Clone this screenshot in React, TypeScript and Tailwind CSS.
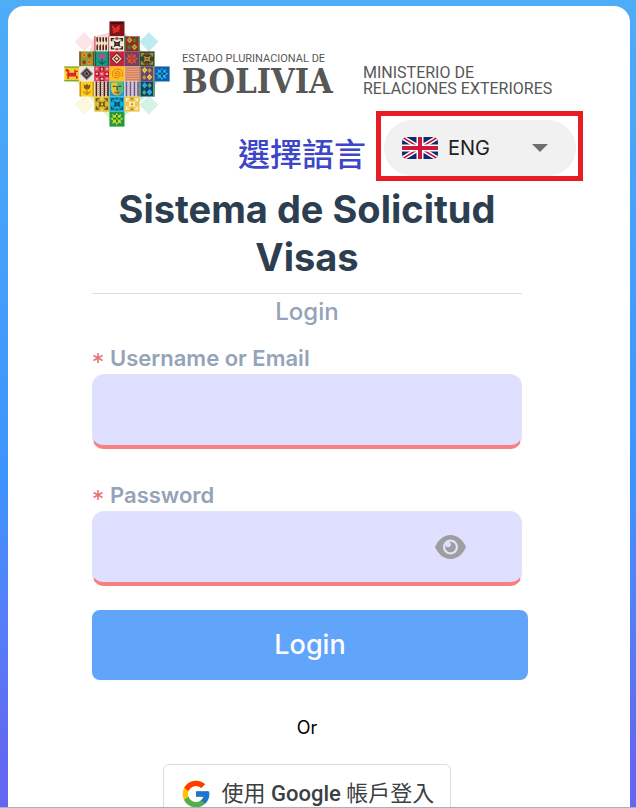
import { useState } from 'react';
import type { FormEvent, ReactNode } from 'react';
import { FcGoogle } from 'react-icons/fc';

type Motif =
  | 'bird'
  | 'teeth'
  | 'weave'
  | 'diamond'
  | 'check'
  | 'spiral'
  | 'bars'
  | 'stripes'
  | 'face'
  | 'star'
  | 'flower'
  | 'beads'
  | 'llama';

type Tile = { col: number; row: number; bg: string; fg: string; alt: string; motif: Motif };

const tiles: Tile[] = [
  { col: 3, row: 0, bg: '#7d1418', fg: '#e02a2c', alt: '#4a0d10', motif: 'bird' },
  { col: 2, row: 1, bg: '#f3e3cf', fg: '#5c2418', alt: '#c8323c', motif: 'teeth' },
  { col: 3, row: 1, bg: '#f1ead9', fg: '#2e2522', alt: '#a33a32', motif: 'weave' },
  { col: 4, row: 1, bg: '#8c2f1e', fg: '#d9a13a', alt: '#3e7d3b', motif: 'beads' },
  { col: 1, row: 2, bg: '#8a9a35', fg: '#f08a24', alt: '#8c3a1c', motif: 'beads' },
  { col: 2, row: 2, bg: '#179b80', fg: '#d63d91', alt: '#0f5f4c', motif: 'flower' },
  { col: 3, row: 2, bg: '#d21f3f', fg: '#f3dfc4', alt: '#7c2c22', motif: 'diamond' },
  { col: 4, row: 2, bg: '#6d4068', fg: '#d9532f', alt: '#a03a48', motif: 'star' },
  { col: 5, row: 2, bg: '#274c2b', fg: '#c98a3a', alt: '#b53a2a', motif: 'weave' },
  { col: 0, row: 3, bg: '#f6cf2f', fg: '#dd2433', alt: '#6fae3a', motif: 'llama' },
  { col: 1, row: 3, bg: '#ece6e0', fg: '#30282a', alt: '#8b7d78', motif: 'diamond' },
  { col: 2, row: 3, bg: '#b7122f', fg: '#f1b9b2', alt: '#e34a5c', motif: 'check' },
  { col: 3, row: 3, bg: '#fbc21a', fg: '#ee6a1d', alt: '#ee6a1d', motif: 'spiral' },
  { col: 4, row: 3, bg: '#e9a07a', fg: '#c66a50', alt: '#c66a50', motif: 'bars' },
  { col: 5, row: 3, bg: '#6a3f7c', fg: '#e7cf3c', alt: '#b0a03c', motif: 'beads' },
  { col: 6, row: 3, bg: '#0d5fa8', fg: '#25b4e8', alt: '#0b3f7c', motif: 'star' },
  { col: 1, row: 4, bg: '#fbd01e', fg: '#8a5a14', alt: '#c98a1c', motif: 'flower' },
  { col: 2, row: 4, bg: '#f4ead9', fg: '#4b1f1c', alt: '#8f4a3a', motif: 'stripes' },
  { col: 3, row: 4, bg: '#1d9fc4', fg: '#f3c52e', alt: '#1a5f4a', motif: 'face' },
  { col: 4, row: 4, bg: '#e6dbe6', fg: '#6f5a86', alt: '#a995b8', motif: 'stripes' },
  { col: 5, row: 4, bg: '#0c3f78', fg: '#2ea8dc', alt: '#5ab24a', motif: 'beads' },
  { col: 2, row: 5, bg: '#dcb92e', fg: '#6a5218', alt: '#f0d35a', motif: 'weave' },
  { col: 3, row: 5, bg: '#14b0dc', fg: '#0d4c64', alt: '#0d6a94', motif: 'weave' },
  { col: 4, row: 5, bg: '#efc64a', fg: '#fbf0c4', alt: '#b98a20', motif: 'weave' },
  { col: 3, row: 6, bg: '#1f9a3c', fg: '#c9dc2c', alt: '#0f7c2c', motif: 'star' },
];

const motifs: Record<Motif, (fg: string, alt: string) => ReactNode> = {
  bird: (fg, alt) => (
    <>
      <path d="M3 3h38v5H3z" fill={alt} />
      <path d="M9 12l6 4 3 6 5-7 7-3 5 4-6 3 4 4-5 5 4 5-9-2-6 5-9-2 4-4-5-3 5-3-5-5z" fill={fg} />
    </>
  ),
  teeth: (fg, alt) => (
    <>
      <path d="M0 0h3v45H0zM42 0h3v45h-3z" fill={alt} />
      <path d="M6 3h5v10l-2 6-3-6zM15 3h5v10l-2 6-3-6zM24 3h5v10l-2 6-3-6zM33 3h5v10l-2 6-3-6z" fill={fg} />
      <path d="M6 42h5V28l-2-6-3 6zM15 42h5V28l-2-6-3 6zM24 42h5V28l-2-6-3 6zM33 42h5V28l-2-6-3 6z" fill={fg} />
    </>
  ),
  weave: (fg, alt) => (
    <>
      <path d="M4 5h11v4h-6v6H4zM41 5H30v4h6v6h5zM4 40h11v-4h-6v-6H4zM41 40H30v-4h6v-6h5z" fill={fg} />
      <path d="M12 12l7 5h8l7-5-3 9v4l3 8-7-4h-8l-7 4 3-8v-4z" fill={fg} />
      <path d="M18 3h9v7h-9zM18 36h9v6h-9zM20 20h6v6h-6z" fill={alt} />
    </>
  ),
  diamond: (fg, alt) => (
    <>
      <path d="M22 2l20 20-20 20L2 22z" fill={alt} />
      <path d="M22 7l15 15-15 15L7 22z" fill={fg} />
      <path d="M22 12l10 10-10 10-10-10z" fill={alt} />
      <path d="M22 17l5 5-5 5-5-5z" fill={fg} />
    </>
  ),
  check: (fg, alt) => (
    <>
      <path d="M0 0h15v15H0zM30 0h15v15H30zM15 15h15v15H15zM0 30h15v15H0zM30 30h15v15H30z" fill={alt} />
      <path
        d="M4 4h5v5H4zM20 4h5v8h-5zM35 5h6v5h-6zM4 19h7v6H4zM19 20h6v5h-6zM34 19h7v7h-7zM5 35h5v5H5zM19 34h8v6h-8zM35 35h6v4h-6z"
        fill={fg}
      />
    </>
  ),
  spiral: (fg) => (
    <path
      d="M22 23c0-3 5-3 5 1s-9 6-10 0 5-11 11-8 6 16-3 18S8 31 9 21 23 6 31 9s11 14 7 22"
      fill="none"
      stroke={fg}
      strokeWidth="3"
    />
  ),
  bars: (fg) => <path d="M3 5h41M3 12h41M3 19h41M3 26h41M3 33h41M3 40h41" stroke={fg} strokeWidth="2" />,
  stripes: (fg, alt) => (
    <>
      <path d="M6 0v45M18 0v45M30 0v45M41 0v45" stroke={fg} strokeWidth="5" />
      <path d="M12 2v41M24 2v41M36 2v41" stroke={alt} strokeWidth="2" strokeDasharray="3 3" />
    </>
  ),
  face: (fg, alt) => (
    <>
      <path d="M5 3h36v22q-3 15-18 17Q8 40 5 25z" fill={fg} />
      <path d="M23 3h18v22q-3 15-18 17z" fill="#6db768" />
      <path d="M10 13h9v4h-9zM27 13h9v4h-9zM21 14h4v13h-4z" fill={alt} />
      <path d="M14 31h18l-4 5H18z" fill="#d4362c" />
    </>
  ),
  star: (fg, alt) => (
    <>
      <path d="M22 4l5 8 9-5-3 10 9 5-9 5 3 10-9-4-5 8-5-8-9 4 3-10-8-5 8-5-3-10 9 5z" fill={fg} />
      <path d="M20 10h5v9h9v5h-9v9h-5v-9h-9v-5h9z" fill={alt} />
      <path d="M20 19h5v5h-5z" fill={fg} />
    </>
  ),
  flower: (fg, alt) => (
    <>
      <path d="M3 0v45M42 0v45" stroke={alt} strokeWidth="4" />
      <path d="M13 8l6 4 4-6 4 6 6-4-1 11-5 5h-8l-5-5z" fill={fg} />
      <path d="M21 22h4v19h-4zM12 28l9 6v5l-9-6zM34 28l-9 6v5l9-6z" fill={alt} />
    </>
  ),
  beads: (fg, alt) => (
    <>
      <path d="M2 0v45M43 0v45" stroke={alt} strokeWidth="4" />
      <path d="M15 2l9 9-9 10-8-10zM30 23l9 9-9 10-8-10z" fill={fg} />
      <path d="M30 4l7 8-7 8-6-8zM14 25l7 8-7 8-6-8z" fill={alt} />
      <path d="M13 9h4v4h-4zM28 30h4v4h-4z" fill={alt} />
    </>
  ),
  llama: (fg, alt) => (
    <>
      <path d="M0 0h45v4H0zM0 41h45v4H0z" fill={alt} />
      <path d="M4 8h7v3h4v8h15V9h4v4h7v4h-5v12h4v8h-5v-7H14v7H9v-9L5 24h4v-9H4z" fill={fg} />
    </>
  ),
};

const ChakanaLogo = () => (
  <svg viewBox="24 26 320 320" className="size-[106px] shrink-0" aria-label="Bolivia">
    <g opacity="0.75">
      <path d="M85 60l29 29-29 29-29-29z" fill="#fbdde0" />
      <path d="M280 60l29 29-29 29-29-29z" fill="#a9e3ec" />
      <path d="M85 250l29 29-29 29-29-29z" fill="#fbf6d2" />
      <path d="M280 250l29 29-29 29-29-29z" fill="#c8efdd" />
      <path d="M115 73l45-12v60h-60z" fill="#f8c6d6" />
      <path d="M206 60l58 62h-58z" fill="#dcc0e2" />
      <path d="M58 210h60v60z" fill="#fdeab8" />
      <path d="M252 210h58l-58 50z" fill="#bfe3f0" />
      <path d="M96 255h66v66z" fill="#e5f0a8" />
      <path d="M206 255h64l-64 60z" fill="#bde8c8" />
    </g>
    {tiles.map((tile) => (
      <g key={`${tile.col}-${tile.row}`} transform={`translate(${25 + tile.col * 45.4} ${27 + tile.row * 45.4})`}>
        <rect width="45.4" height="45.4" fill={tile.bg} />
        {motifs[tile.motif](tile.fg, tile.alt)}
      </g>
    ))}
  </svg>
);

const UkFlag = () => (
  <svg viewBox="0 0 36 22" className="w-9 h-[22px] shrink-0" aria-hidden="true">
    <clipPath id="flag">
      <rect width="36" height="22" rx="5" />
    </clipPath>
    <g clipPath="url(#flag)">
      <rect width="36" height="22" fill="#0a2a72" />
      <path d="M0 0l36 22M36 0L0 22" stroke="#fff" strokeWidth="4.5" />
      <path d="M0 0l18 11M36 22L18 11M36 0L18 11M0 22l18-11" stroke="#d0163a" strokeWidth="1.6" />
      <path d="M18 0v22M0 11h36" stroke="#fff" strokeWidth="7" />
      <path d="M18 0v22M0 11h36" stroke="#d0163a" strokeWidth="4" />
    </g>
  </svg>
);

const EyeIcon = () => (
  <svg viewBox="0 0 31 24" className="h-6 w-[31px]" aria-hidden="true">
    <path d="M0 12C3 5 8.500 0 15.500 0S28 5 31 12c-3 7-8.500 12-15.500 12S3 19 0 12z" fill="#9e9e9e" />
    <circle cx="15.500" cy="12" r="7.600" fill="#dfe0ff" />
    <circle cx="15.500" cy="12" r="5.300" fill="#9e9e9e" />
    <circle cx="13.200" cy="9.600" r="2.700" fill="#dfe0ff" />
  </svg>
);

const LanguagePicker = () => {
  const [language, setLanguage] = useState('ENG');

  return (
    <div className="flex items-center gap-2.5">
      <label
        htmlFor="language"
        className="pt-3 text-[32px] leading-10 font-medium text-[#3d46c8] font-['Noto_Sans_CJK_TC',sans-serif]"
      >
        選擇語言
      </label>
      <div className="border-[5px] border-[#e81c24] pt-1 pr-0.5 pl-[3px]">
        <div className="relative flex h-14 w-48 items-center rounded-full bg-[#f1f1f1] pl-[18px]">
          <UkFlag />
          <select
            id="language"
            value={language}
            onChange={(e) => setLanguage(e.target.value)}
            className="h-full w-full appearance-none bg-transparent pl-2.5 text-xl text-[#212121] outline-none"
          >
            <option>ENG</option>
            <option>ESP</option>
          </select>
          <svg viewBox="0 0 16 8" className="pointer-events-none absolute right-7 h-2 w-4" aria-hidden="true">
            <path d="M0 0h16L8 8z" fill="#6f6f6f" />
          </svg>
        </div>
      </div>
    </div>
  );
};

const Header = () => (
  <header className="flex items-start pl-14 pr-[47px] pt-[15px] pb-1">
    <ChakanaLogo />
    <div className="flex grow flex-col pl-3 pt-8">
      <div className="flex items-start justify-between">
        <div className="text-[#575756]">
          <p className="whitespace-nowrap text-[11px] leading-3 font-['Roboto',sans-serif]">ESTADO PLURINACIONAL DE</p>
          <p className="font-bold text-[34px] leading-8 font-['DejaVu_Serif_Condensed','Liberation_Serif',serif]">
            BOLIVIA
          </p>
        </div>
        <p className="w-[220px] pt-3 text-base leading-4 text-[#575756] font-['Roboto',sans-serif]">
          MINISTERIO DE
          <br />
          RELACIONES EXTERIORES
        </p>
      </div>
      <div className="flex self-end pt-3.5">
        <LanguagePicker />
      </div>
    </div>
  </header>
);

type FieldProps = { id: string; label: string; type: string; children?: ReactNode };

const Field = ({ id, label, type, children }: FieldProps) => (
  <div className="mr-1.5">
    <label htmlFor={id} className="flex items-center gap-1.5 text-[22px] leading-8 font-semibold text-[#94a3b8]">
      <svg viewBox="0 0 12 12" className="size-3" aria-hidden="true">
        <path d="M6 1v10M1.500 3.500l9 5M10.500 3.500l-9 5" stroke="#e57373" strokeWidth="1.600" />
      </svg>
      {label}
    </label>
    <div className="relative">
      <input
        id={id}
        type={type}
        className="block h-[75px] w-full rounded-xl border border-b-4 border-[#e2e4f3] border-b-[#f98080] bg-[#dfe0ff] px-4 text-xl outline-none"
      />
      {children}
    </div>
  </div>
);

const LoginForm = () => {
  const [showPassword, setShowPassword] = useState(false);

  const handleSubmit = (e: FormEvent) => {
    e.preventDefault();
  };

  return (
    <form onSubmit={handleSubmit} className="pl-[84px] pr-[102px]">
      <div className="mr-1.5 text-center">
        <h1 className="border-b border-[#dcdfe2] pb-3 text-[38px] leading-12 font-bold text-[#2c3e50]">
          Sistema de Solicitud Visas
        </h1>
        <h2 className="text-2xl leading-9 font-medium text-[#94a3b8]">Login</h2>
      </div>

      <div className="flex flex-col gap-[30px] pt-3">
        <Field id="username" label="Username or Email" type="text" />
        <Field id="password" label="Password" type={showPassword ? 'text' : 'password'}>
          <button
            type="button"
            aria-label="Show password"
            onClick={() => setShowPassword(!showPassword)}
            className="absolute right-14 top-6"
          >
            <EyeIcon />
          </button>
        </Field>
      </div>

      <button
        type="submit"
        className="mt-6 h-[70px] w-full rounded-lg bg-[#60a5fa] text-[27px] font-medium text-white"
      >
        Login
      </button>

      <p className="mr-1.5 pt-8 pb-5 text-center text-lg leading-8 text-black">Or</p>

      <div className="mr-1.5 flex justify-center">
        <button
          type="button"
          className="flex h-[60px] items-center gap-2.5 whitespace-nowrap rounded-md border border-[#dadce0] px-4 text-[22px] leading-7 text-[#3c4043] font-['Roboto','Noto_Sans_CJK_TC',sans-serif]"
        >
          <FcGoogle className="size-8" />
          <span>
            使用 <span className="font-medium">Google</span> 帳戶登入
          </span>
        </button>
      </div>
    </form>
  );
};

export default function App() {
  return (
    <main className="h-screen overflow-hidden border-b border-[#a9b0ba] bg-linear-to-b from-[#4facf7] via-[#3d93fd] via-60% to-[#6366f1] to-95% pl-2 pr-1.5 pt-1.5 font-['Inter',sans-serif]">
      <div className="min-h-full rounded-2xl bg-white">
        <Header />
        <LoginForm />
      </div>
    </main>
  );
}
